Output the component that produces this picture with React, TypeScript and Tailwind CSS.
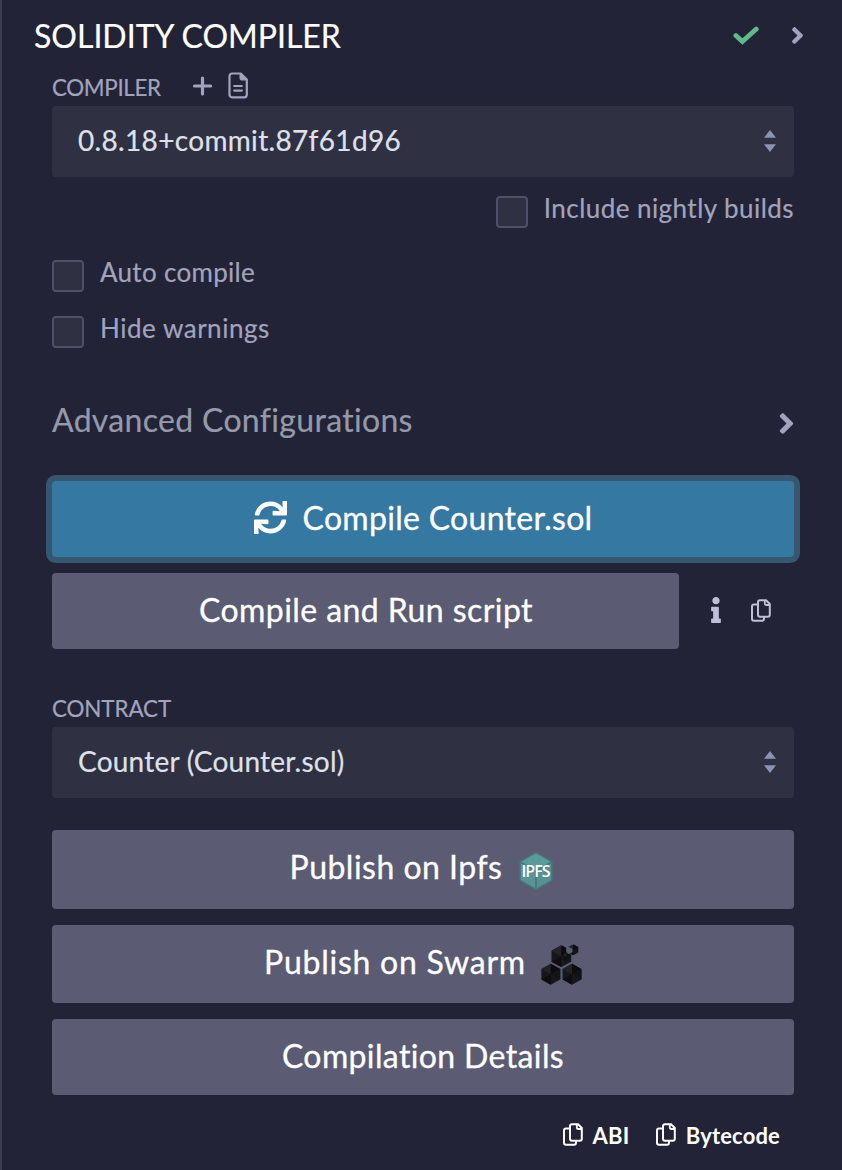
import type { ReactNode } from 'react';
import { FaSync, FaInfo, FaAngleRight } from 'react-icons/fa';

function CopyIcon({ className = '' }: { className?: string }) {
  return (
    <svg viewBox="0 0 20 23" className={`h-[23px] w-[20px] shrink-0 ${className}`} fill="none" stroke="currentColor" strokeWidth="2">
      <path d="M9 1.200h6l3.800 3.800v10.800a2 2 0 0 1-2 2H9a2 2 0 0 1-2-2V3.200a2 2 0 0 1 2-2z" />
      <path d="M13.800 1.200v3.600a1.200 1.200 0 0 0 1.200 1.200h3.800" strokeWidth="1.800" />
      <path d="M6.800 5.500H3a2 2 0 0 0-2 2v12.300a2 2 0 0 0 2 2h8a2 2 0 0 0 2-2v-1.800" />
    </svg>
  );
}

function FileIcon() {
  return (
    <svg viewBox="0 0 20 27" className="mb-[3px] ml-[16px] h-[27px] w-[20px]" fill="none" stroke="currentColor" strokeWidth="2.200">
      <path d="M4 1.500h8.800l6 6V22.800a2.500 2.500 0 0 1-2.500 2.500H4a2.500 2.500 0 0 1-2.500-2.500V4A2.500 2.500 0 0 1 4 1.500z" />
      <path d="M12 1.500v5a1.500 1.500 0 0 0 1.500 1.500h5z" fill="currentColor" strokeWidth="1" />
      <path d="M6.200 14h7.600M6.200 18.600h7.600" strokeLinecap="round" />
    </svg>
  );
}

function IpfsIcon() {
  return (
    <svg viewBox="0 0 34 38" className="mt-[9px] mr-[3px] ml-[17px] h-[38px] w-[34px]">
      <path d="M17 0L33.500 9.500v19L17 38L.5 28.500v-19z" fill="#437b80" />
      <path d="M17 1.500L31.500 9.800L17 18L2.500 9.800z" fill="#5d9b9b" />
      <path d="M2 11.500L16 19.500V36L2 28z" fill="#5a9496" />
      <path d="M32 11.500L18 19.500V36L32 28z" fill="#579194" />
      <text x="16.500" y="24.800" textAnchor="middle" fill="#fff" className="font-['Open_Sans',sans-serif] text-[16px] font-semibold tracking-[-1px]">IPFS</text>
    </svg>
  );
}

function Hex({ x, y, r }: { x: number; y: number; r: number }) {
  const w = r * 0.9;
  const h = r / 2;
  return (
    <g transform={`translate(${x} ${y})`}>
      <path d={`M0 ${-r}L${w} ${-h}V${h}L0 ${r}L${-w} ${h}V${-h}z`} fill="#17171b" />
      <path d={`M0 ${-r}L${-w} ${-h}L0 0z`} fill="#222227" />
      <path d={`M0 ${-r}L${w} ${-h}L0 0z`} fill="#0c0c0f" />
      <path d={`M0 0L${w} ${-h}V${h}z`} fill="#131317" />
      <path d={`M0 0L${-w} ${h}L0 ${r}z`} fill="#0e0e12" />
    </g>
  );
}

function SwarmIcon() {
  return (
    <svg viewBox="0 0 41 41" className="mt-[6px] ml-[15px] h-[41px] w-[41px]">
      <Hex x={20.3} y={12.2} r={10.9} />
      <path d="M25.200 2h6v9h-1.500l-4.500-2.500z" fill="#5b5c73" />
      <Hex x={25.800} y={12.800} r={4.300} />
      <Hex x={32.300} y={5.800} r={5.400} />
      <path d="M26.500 2.500l5 2.200v3.500l-3 1.500h-2z" fill="#5b5c73" />
      <Hex x={9.800} y={30.300} r={10.500} />
      <Hex x={31} y={30.300} r={10.500} />
    </svg>
  );
}

function Select({ children }: { children: ReactNode }) {
  return (
    <div className="flex h-[71px] items-center justify-between rounded-[4px] bg-[#2f3042] pr-[18px] pl-[26px] text-[28px] text-[#dfe1ea]">
      <span className="pb-[3px]">{children}</span>
      <svg viewBox="0 0 12 24" className="mb-[1px] h-[24px] w-[12px]" fill="#8d93b2">
        <path d="M6 1L12 8.800H0zM0 15.200h12L6 23z" />
      </svg>
    </div>
  );
}

function Check({ children, className = '' }: { children: ReactNode; className?: string }) {
  return (
    <label className={`flex h-8 items-start gap-4 text-[26px] leading-[24px] text-[#a2a3bd] ${className}`}>
      <span className="size-8 shrink-0 rounded-[4px] border-2 border-[#4f5067] bg-[#2f3042]" />
      <span className="whitespace-nowrap">{children}</span>
    </label>
  );
}

const button = 'flex items-center justify-center rounded-[4px] text-[32px] leading-[38px] text-white [-webkit-text-stroke:0.3px]';

export default function App() {
  return (
    <div className="h-[1170px] w-[842px] overflow-hidden border-l-2 border-[#3c3e50] bg-[#222336] pr-[48px] pl-[50px] font-['Lato',sans-serif] text-[#a2a3bd] [-webkit-text-stroke:0.2px]">
      <header className="-mr-[12px] -ml-[18px] flex h-[70px] items-center">
        <h1 className="grow pt-[2px] text-[32px] text-white">SOLIDITY COMPILER</h1>
        <svg viewBox="0 0 26 20" className="mt-[2px] mr-[30px] h-[20px] w-[26px]" fill="none" stroke="#5fb98a" strokeWidth="4.800" strokeLinecap="round" strokeLinejoin="miter">
          <path d="M2.900 9.600L9.400 15.600L23.300 3" />
        </svg>
        <FaAngleRight className="h-[27px] w-[17px]" />
      </header>

      <div className="flex h-[36px] items-center pb-[2px]">
        <span className="w-[140px] pt-[2px] text-[22.400px] tracking-[-0.350px]">COMPILER</span>
        <svg viewBox="0 0 20 20" className="mb-[3px] h-[20px] w-[20px]" stroke="currentColor" strokeWidth="3.200" strokeLinecap="round">
          <path d="M10.500 2v16M2.500 10h16" />
        </svg>
        <FileIcon />
      </div>
      <Select><span className="tracking-[0.330px]">0.8.18+commit.87f61d96</span></Select>

      <Check className="mt-[19px] justify-end"><span className="tracking-[0.450px]">Include nightly builds</span></Check>
      <Check className="mt-8"><span className="tracking-[0.300px]">Auto compile</span></Check>
      <Check className="mt-6"><span className="tracking-[0.520px]">Hide warnings</span></Check>

      <div className="mt-[51px] flex h-[41px] items-center justify-between text-[32px] leading-[41px] text-[#959aab]">
        <span className="tracking-[0.320px]">Advanced Configurations</span>
        <FaAngleRight className="-mr-[3px] mt-[7px] h-[33px] w-[21px] text-[#a2a3bd]" />
      </div>

      <button className={`${button} mt-[41px] h-[76px] w-full bg-[#3578a2] pb-[3px] tracking-[0.300px] ring-6 ring-[#36576f]`}>
        <FaSync className="mr-[16px] mb-[1px] size-[33px]" />
        Compile Counter.sol
      </button>

      <div className="mt-4 flex items-center">
        <button className={`${button} h-[76px] w-[627px] bg-[#5b5c73] pb-[3px] pl-[1px] tracking-[0.430px]`}>Compile and Run script</button>
        <FaInfo className="mb-[3px] ml-[31px] h-[26px] w-[12px] text-[#bfc0d6]" />
        <CopyIcon className="mb-[2px] ml-[28.500px] text-[#bfc0d6]" />
      </div>

      <div className="mt-[50px] mb-[8px] text-[22.400px] leading-[20px] tracking-[-0.100px]">CONTRACT</div>
      <Select><span className="tracking-[0.230px]">Counter (Counter.sol)</span></Select>

      <button className={`${button} mt-8 h-[79px] w-full bg-[#5b5c73] pb-[6px] tracking-[0.480px]`}>
        Publish on Ipfs
        <IpfsIcon />
      </button>
      <button className={`${button} mt-4 h-[78px] w-full bg-[#5b5c73] pb-[5px] tracking-[0.750px]`}>
        Publish on Swarm
        <SwarmIcon />
      </button>
      <button className={`${button} mt-4 h-[76px] w-full bg-[#5b5c73] pb-[3px] tracking-[0.370px]`}>Compilation Details</button>

      <div className="mt-[28px] flex h-[25px] items-center justify-end pr-[14px] text-[22px] leading-[25px] font-bold tracking-[0.150px] text-white [-webkit-text-stroke:0px]">
        <CopyIcon className="mb-[2px]" />
        <span className="mr-[27px] ml-[9.500px]">ABI</span>
        <CopyIcon className="mb-[2px]" />
        <span className="ml-[9.500px]">Bytecode</span>
      </div>
    </div>
  );
}
